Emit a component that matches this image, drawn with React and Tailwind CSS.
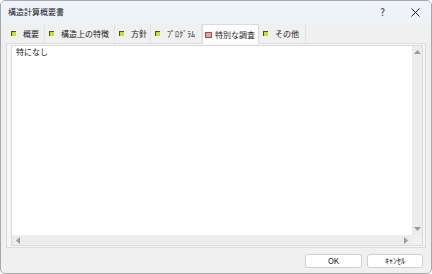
import React from "react";

const font = { fontFamily: '"Noto Sans CJK JP", "Noto Sans", sans-serif' };

function GIcon() {
  return <span className="inline-block w-[5px] h-[5px] bg-[#bdeb10] border-l border-t border-[#4a4a4a] mr-[7px]" />;
}

function Tab({ label, selected, pr = "pr-[5px]" }) {
  if (selected) {
    return (
      <div className="flex items-center h-[20px] pl-[2px] pr-[3px] bg-white border border-b-0 border-[#dcdcdc] -mb-px relative z-10">
        <span className="inline-block w-[7px] h-[6px] bg-[#f49a9a] border border-[#9a5050] mr-[3px]" />
        <span>{label}</span>
      </div>
    );
  }
  return (
    <div className={"flex items-center h-[19px] pl-[4px] border-r border-[#e4e4e4] " + pr}>
      <GIcon />
      <span>{label}</span>
    </div>
  );
}

export default function App() {
  return (
    <div className="w-[432px] h-[274px] bg-[#f0f0f0] border border-[#a8a8a8] rounded-[5px] overflow-hidden flex flex-col text-[8px] leading-none text-[#1a1a1a]" style={font}>
      <div className="h-[22px] bg-[#eef2f9] flex items-center pl-[7px] pr-[10px] shrink-0">
        <span className="flex-1">構造計算概要書</span>
        <span className="text-[10px] mr-[26px] text-[#333]">?</span>
        <svg width="9" height="9" viewBox="0 0 9 9" className="mr-[1px]"><path d="M0.5 0.5 L8.5 8.5 M8.5 0.5 L0.5 8.5" stroke="#222" strokeWidth="1" /></svg>
      </div>
      <div className="h-[20px] flex items-end pl-[6px] shrink-0">
        <Tab label="概要" />
        <Tab label="構造上の特徴" />
        <Tab label="方針" pr="pr-[3px]" />
        <Tab label="ﾌﾟﾛｸﾞﾗﾑ" pr="pr-[6px]" />
        <Tab label="特別な調査" selected />
        <Tab label="その他" pr="pr-[6px]" />
      </div>
      <div className="mx-[5px] h-[205px] border border-[#dcdcdc] bg-[#f6f6f6] pl-[4px] pr-[2px] pt-[1px] pb-[1px] shrink-0">
        <div className="h-full border border-[#dadada] bg-white flex flex-col">
          <div className="flex flex-1 min-h-0">
            <div className="flex-1 pl-[4px] pt-[2px]">特になし</div>
            <div className="w-[10px] bg-[#ececec] flex flex-col items-center justify-between py-[4px]">
              <svg width="7" height="4" viewBox="0 0 7 4"><path d="M3.5 0 L7 4 L0 4 Z" fill="#9a9a9a" /></svg>
              <svg width="7" height="4" viewBox="0 0 7 4"><path d="M0 0 L7 0 L3.5 4 Z" fill="#9a9a9a" /></svg>
            </div>
          </div>
          <div className="h-[10px] flex">
            <div className="flex-1 bg-[#ececec] flex items-center justify-between px-[4px]">
              <svg width="4" height="7" viewBox="0 0 4 7"><path d="M0 3.5 L4 0 L4 7 Z" fill="#9a9a9a" /></svg>
              <svg width="4" height="7" viewBox="0 0 4 7"><path d="M4 3.5 L0 0 L0 7 Z" fill="#9a9a9a" /></svg>
            </div>
            <div className="w-[10px] bg-[#f0f0f0]" />
          </div>
        </div>
      </div>
      <div className="flex-1 flex justify-end items-center pr-[8px] gap-[5px]">
        <button className="w-[57px] h-[14px] bg-white border border-[#d0d0d0] rounded-[3px] text-[8px] leading-none">OK</button>
        <button className="w-[56px] h-[14px] bg-white border border-[#d0d0d0] rounded-[3px] text-[8px] leading-none">ｷｬﾝｾﾙ</button>
      </div>
    </div>
  );
}
